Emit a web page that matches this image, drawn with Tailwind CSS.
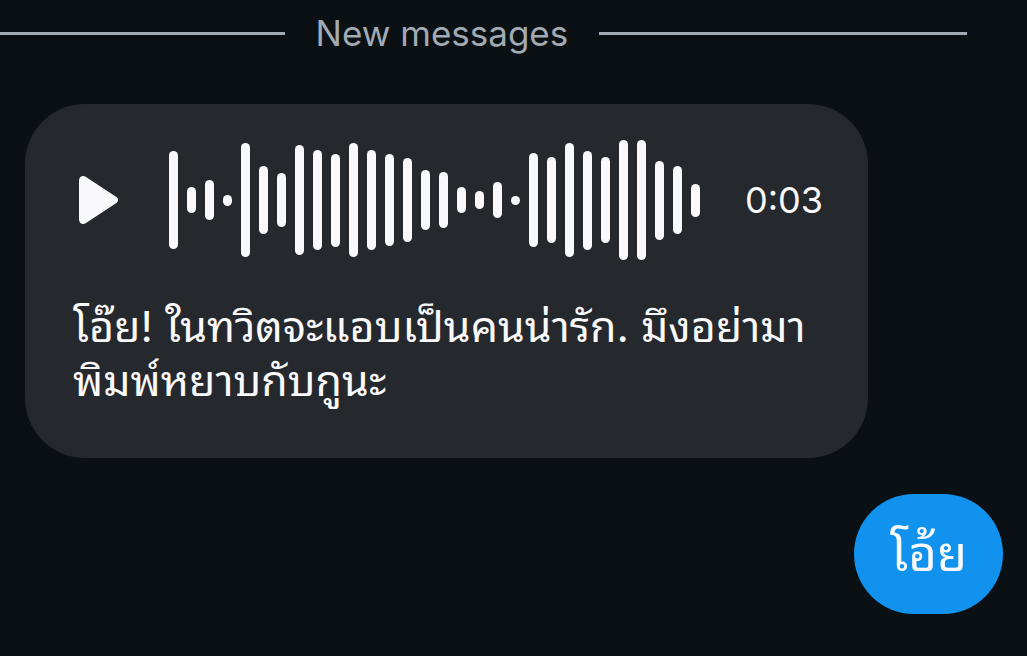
<!DOCTYPE html>
<html lang="th">
  <head>
    <meta charset="UTF-8" />
    <meta name="viewport" content="width=device-width, initial-scale=1.0" />
    <title>Messages</title>
    <script src="https://cdn.jsdelivr.net/npm/@tailwindcss/browser@4"></script>
  </head>
  <body
    class="min-h-screen bg-[#0b1014] text-[#f9f9fb] font-['Inter','Noto_Sans_Thai_Looped','Noto_Sans_Thai','Noto_Sans',sans-serif]"
  >
    <div class="flex items-center gap-[31px] pt-3 pr-[60px] text-[#a2aab4]">
      <div class="h-[3px] flex-[284] bg-[#a2aab4]"></div>
      <h2 class="text-[35px] leading-[43px]">New messages</h2>
      <div class="h-[3px] flex-[367] bg-[#a2aab4]"></div>
    </div>

    <main class="flex flex-col gap-9 px-6 pt-[49px]">
      <article
        class="ml-px w-[843px] max-w-full rounded-[60px] bg-[#25282d] px-12 pt-9 pb-[51px]"
      >
        <div class="flex h-[120px] items-center">
          <button type="button" aria-label="Play" class="ml-1 w-12 cursor-pointer">
            <svg viewBox="0 0 48 56" class="h-14 w-12" fill="#f9f9fb">
              <path
                d="M2 8.500C2 4.800 5.500 2.800 8.600 4.800L39 24.800C41.900 26.700 41.900 29.300 39 31.200L8.600 51.200C5.500 53.200 2 51.200 2 47.500Z"
              />
            </svg>
          </button>
          <div id="waveform" class="ml-11 flex h-full items-center gap-[9px]"></div>
          <time class="ml-[45px] text-[36px] leading-[44px]">0:03</time>
        </div>
        <p class="mt-[39px] text-[43px] leading-[54px] whitespace-nowrap">
          โอ๊ย! ในทวิตจะแอบเป็นคนน่ารัก. มึงอย่ามา<br />พิมพ์หยาบกับกูนะ
        </p>
      </article>

      <article
        class="flex h-[120px] items-center self-end rounded-[60px] bg-[#1092ee] px-9 text-[49px] leading-[60px]"
      >
        <p>โอ้ย</p>
      </article>
    </main>

    <script>
      // bar heights in px, from start to end of the clip
      const levels = [
        98, 26, 40, 11, 114, 68, 54, 110, 100, 93, 114, 100, 92, 84, 60, 56,
        26, 18, 36, 9, 94, 86, 114, 99, 86, 120, 120, 79, 68, 33,
      ];
      const waveform = document.getElementById("waveform");

      levels.forEach((level) => {
        const bar = document.createElement("span");
        bar.className = "w-[9px] rounded-full bg-[#f9f9fb]";
        bar.style.height = `${level}px`;
        waveform.appendChild(bar);
      });
    </script>
  </body>
</html>
